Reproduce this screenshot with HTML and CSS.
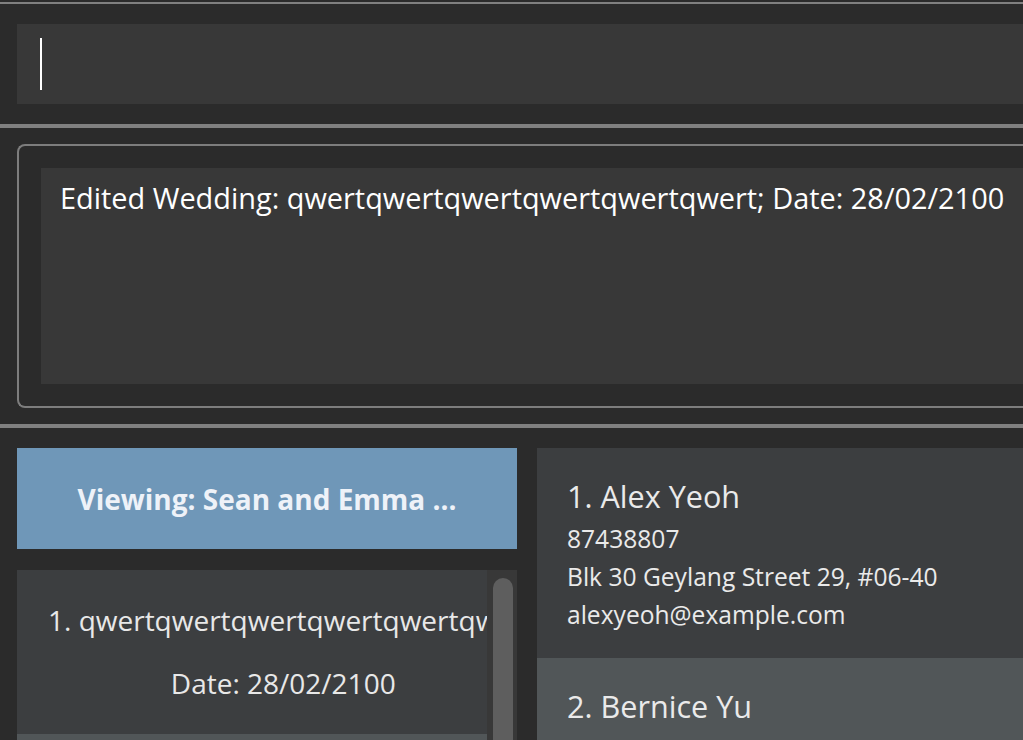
FILE: index.html
```html
<!DOCTYPE html>
<html>
<head>
<meta charset="utf-8">
<link rel="stylesheet" href="styles.css">
</head>
<body>
<div class="app">
  <div class="rule rule-top"></div>
  <section class="command">
    <div class="command-box"><span class="caret"></span></div>
  </section>
  <div class="rule"></div>
  <section class="result">
    <div class="result-frame">
      <div class="result-box">Edited Wedding: qwertqwertqwertqwertqwertqwert; Date: 28/02/2100</div>
    </div>
  </section>
  <div class="rule"></div>
  <section class="main">
    <div class="wedding-col">
      <div class="wedding-header">Viewing: Sean and Emma ...</div>
      <div class="wedding-list">
        <div class="wedding-viewport">
          <div class="wedding-card">
            <div class="wedding-inner">
              <div class="wedding-title">1. qwertqwertqwertqwertqwertqwert</div>
              <div class="wedding-date">Date: 28/02/2100</div>
            </div>
          </div>
          <div class="wedding-card alt"></div>
        </div>
        <div class="scroll-track"><div class="scroll-thumb"></div></div>
      </div>
    </div>
    <div class="person-list">
      <div class="person-card">
        <div class="person-name">1. Alex Yeoh</div>
        <div class="person-line">87438807</div>
        <div class="person-line">Blk 30 Geylang Street 29, #06-40</div>
        <div class="person-line">alexyeoh@example.com</div>
      </div>
      <div class="person-card alt">
        <div class="person-name">2. Bernice Yu</div>
      </div>
    </div>
  </section>
</div>
</body>
</html>
```
FILE: styles.css
```css
* { box-sizing: border-box; }
html, body { margin: 0; height: 100%; overflow: hidden; }
body {
  background: #2b2b2b;
  font-family: "Open Sans", "Noto Sans", sans-serif;
  color: #fff;
}
.app {
  display: flex;
  flex-direction: column;
  height: 740px;
  padding-top: 2px;
  overflow: hidden;
}
.rule { flex: none; height: 4px; background: #808080; }
.rule-top { height: 2px; }

.command { flex: none; padding: 20px 0 20px 17px; }
.command-box {
  height: 80px;
  background: #383838;
  padding: 14px 0 0 23px;
}
.caret { display: block; width: 2px; height: 52px; background: #fff; }

.result { flex: none; padding: 16px 0 16px 17px; }
.result-frame {
  border: 2px solid #7d7d7d;
  border-right: none;
  border-radius: 8px 0 0 8px;
  padding: 22px 0 22px 22px;
}
.result-box {
  height: 216px;
  background: #383838;
  padding: 10px 19px;
  font-size: 28.9px;
  line-height: 40px;
  white-space: nowrap;
  color: #fff;
}

.main {
  flex: 1;
  min-height: 0;
  display: flex;
  gap: 20px;
  padding: 20px 0 0 17px;
  overflow: hidden;
}
.wedding-col {
  flex: none;
  width: 500px;
  display: flex;
  flex-direction: column;
  gap: 21px;
}
.wedding-header {
  flex: none;
  height: 101px;
  background: #6f97b8;
  display: flex;
  align-items: center;
  justify-content: center;
  font-weight: 700;
  font-size: 28px;
  color: #eef2f8;
}
.wedding-list {
  flex: 1;
  min-height: 0;
  display: flex;
  background: #383838;
}
.wedding-viewport { flex: 1; min-width: 0; overflow: hidden; }
.wedding-card {
  background: #3c3e40;
  padding: 32px 0 33px 31px;
  white-space: nowrap;
}
.wedding-card.alt { background: #515658; height: 164px; }
.wedding-inner {
  display: inline-flex;
  flex-direction: column;
  align-items: center;
  gap: 27px;
  font-size: 28px;
  line-height: 36px;
  color: #e8e8e8;
}
.wedding-date { margin-right: 16px; }
.scroll-track { flex: none; width: 30px; padding: 8px 4px 0 6px; }
.scroll-thumb { height: 220px; background: #5e5e5e; border-radius: 10px; }

.person-list { flex: 1; min-width: 0; margin-right: -20px; overflow: hidden; }
.person-card {
  background: #3c3e40;
  padding: 28px 30px 24px;
  color: #eaeaea;
  white-space: nowrap;
}
.person-card.alt { background: #515658; height: 210px; }
.person-name { font-size: 30.6px; line-height: 40px; margin-bottom: 4px; }
.person-line { font-size: 24.6px; line-height: 38px; }
```
